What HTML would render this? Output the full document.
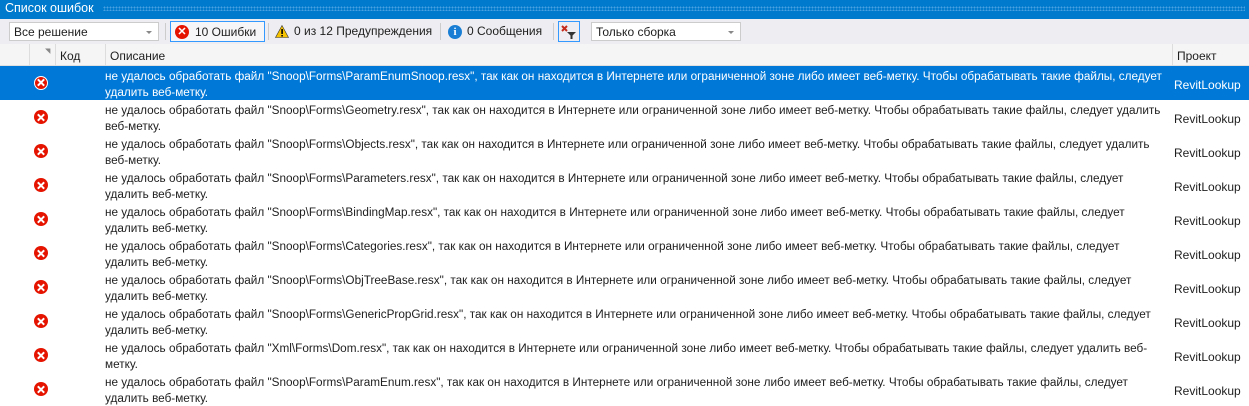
<!DOCTYPE html>
<html><head><meta charset="utf-8"><style>
*{margin:0;padding:0;box-sizing:border-box}
body{width:1249px;height:402px;overflow:hidden;background:#fff;font-family:"Segoe UI","Liberation Sans",sans-serif;font-size:12px;color:#1e1e1e;position:relative}
.title{position:absolute;left:0;top:0;width:1249px;height:19px;background:#007acc;color:#fff;font-size:12.5px;padding:1px 0 0 5px}
.dots{position:absolute;left:103px;right:4px;top:6px;height:5px;background-image:radial-gradient(#4aa3e0 0.8px,transparent 1px);background-size:3px 3px}
.tb{position:absolute;top:19px;left:0;width:1249px;height:25px;background:#eeeef2}
.combo{position:absolute;top:3px;height:19px;background:#fff;border:1px solid #ccc;padding:2px 0 0 4px}
.combo:after{content:"";position:absolute;right:6px;top:8px;border:3px solid transparent;border-top:3px solid #888}
.sep{position:absolute;top:4px;width:1px;height:17px;background:#ccc}
.btn{position:absolute;top:2px;height:21px;padding:3px 0 0 0;white-space:nowrap}
.hdr{position:absolute;top:44px;left:0;width:1249px;height:22px;background:#f5f5f5;border-bottom:1px solid #e0e0e0}
.hdr span{position:absolute;top:5px}
.vl{position:absolute;top:0;width:1px;height:22px;background:#ddd}
.row{position:absolute;left:0;width:1249px;height:34px}
.row.sel{background:#0078d7;color:#fff}
.ic{position:absolute;left:34px;top:10px;width:14px;height:14px;border-radius:50%;background:#e51400}
.sel .ic{border:1.5px solid #fff}
.ic:before,.ic:after{content:"";position:absolute;left:6px;top:2.5px;width:2px;height:9px;background:#fff;transform:rotate(45deg)}
.sel .ic:before,.sel .ic:after{left:4.5px;top:1px}
.ic:after{transform:rotate(-45deg)}
.d{position:absolute;left:105px;top:3px;line-height:15.5px;white-space:nowrap;width:1066px;overflow:hidden;font-size:11.75px}
.p{position:absolute;left:1174px;top:12px}
</style></head><body>
<div class="title">Список ошибок<div class="dots"></div></div>
<div class="tb">
<div class="combo" style="left:9px;width:150px">Все решение</div>
<div class="sep" style="left:165px"></div>
<div class="btn" style="left:170px;width:95px;border:1px solid #3399ff;background:#f6f6f9;padding-left:24px">10 Ошибки<span style="position:absolute;left:4px;top:3px;width:14px;height:14px;border-radius:50%;background:#e51400;color:#fff;font-size:11px;line-height:14px;text-align:center;font-weight:bold">✕</span></div>
<div class="sep" style="left:268px"></div>
<div class="btn" style="left:275px;padding-left:19px"><svg style="position:absolute;left:0;top:4px" width="14" height="13"><path d="M7 0.5 L13.5 12.5 H0.5Z" fill="#f8c400" stroke="#333" stroke-width="0.6"/><rect x="6.3" y="4" width="1.6" height="5" fill="#000"/><rect x="6.3" y="10" width="1.6" height="1.5" fill="#000"/></svg>0 из 12 Предупреждения</div>
<div class="sep" style="left:440px"></div>
<div class="btn" style="left:448px;padding-left:19px"><span style="position:absolute;left:0;top:4px;width:14px;height:14px;border-radius:50%;background:#1a7fd4;color:#fff;font-size:11px;line-height:14px;text-align:center;font-weight:bold;font-family:'Liberation Serif',serif">i</span>0 Сообщения</div>
<div class="sep" style="left:553px"></div>
<div class="btn" style="left:558px;width:22px;border:1px solid #3399ff;padding-top:1px"><svg width="20" height="18"><path d="M3 3 L8 8 M8 3 L3 8" stroke="#c42b1c" stroke-width="2"/><path d="M8 9 H17 L13.5 12.5 V16 H11.5 V12.5Z" fill="#333"/></svg></div>
<div class="combo" style="left:591px;width:150px">Только сборка</div>
</div>
<div class="hdr">
<div class="vl" style="left:29px"></div><div class="vl" style="left:55px"></div><div class="vl" style="left:105px"></div><div class="vl" style="left:1172px"></div>
<span style="left:45px;top:3px;font-size:7px;color:#888">◥</span>
<span style="left:60px">Код</span><span style="left:110px">Описание</span><span style="left:1177px">Проект</span>
</div>
<div class="row sel" style="top:66px"><div class="ic"></div><div class="d">не удалось обработать файл "Snoop\Forms\ParamEnumSnoop.resx", так как он находится в Интернете или ограниченной зоне либо имеет веб-метку. Чтобы обрабатывать такие файлы, следует<br>удалить веб-метку.</div><div class="p">RevitLookup</div></div>
<div class="row" style="top:100px"><div class="ic"></div><div class="d">не удалось обработать файл "Snoop\Forms\Geometry.resx", так как он находится в Интернете или ограниченной зоне либо имеет веб-метку. Чтобы обрабатывать такие файлы, следует удалить<br>веб-метку.</div><div class="p">RevitLookup</div></div>
<div class="row" style="top:134px"><div class="ic"></div><div class="d">не удалось обработать файл "Snoop\Forms\Objects.resx", так как он находится в Интернете или ограниченной зоне либо имеет веб-метку. Чтобы обрабатывать такие файлы, следует удалить<br>веб-метку.</div><div class="p">RevitLookup</div></div>
<div class="row" style="top:168px"><div class="ic"></div><div class="d">не удалось обработать файл "Snoop\Forms\Parameters.resx", так как он находится в Интернете или ограниченной зоне либо имеет веб-метку. Чтобы обрабатывать такие файлы, следует<br>удалить веб-метку.</div><div class="p">RevitLookup</div></div>
<div class="row" style="top:202px"><div class="ic"></div><div class="d">не удалось обработать файл "Snoop\Forms\BindingMap.resx", так как он находится в Интернете или ограниченной зоне либо имеет веб-метку. Чтобы обрабатывать такие файлы, следует<br>удалить веб-метку.</div><div class="p">RevitLookup</div></div>
<div class="row" style="top:236px"><div class="ic"></div><div class="d">не удалось обработать файл "Snoop\Forms\Categories.resx", так как он находится в Интернете или ограниченной зоне либо имеет веб-метку. Чтобы обрабатывать такие файлы, следует<br>удалить веб-метку.</div><div class="p">RevitLookup</div></div>
<div class="row" style="top:270px"><div class="ic"></div><div class="d">не удалось обработать файл "Snoop\Forms\ObjTreeBase.resx", так как он находится в Интернете или ограниченной зоне либо имеет веб-метку. Чтобы обрабатывать такие файлы, следует<br>удалить веб-метку.</div><div class="p">RevitLookup</div></div>
<div class="row" style="top:304px"><div class="ic"></div><div class="d">не удалось обработать файл "Snoop\Forms\GenericPropGrid.resx", так как он находится в Интернете или ограниченной зоне либо имеет веб-метку. Чтобы обрабатывать такие файлы, следует<br>удалить веб-метку.</div><div class="p">RevitLookup</div></div>
<div class="row" style="top:338px"><div class="ic"></div><div class="d">не удалось обработать файл "Xml\Forms\Dom.resx", так как он находится в Интернете или ограниченной зоне либо имеет веб-метку. Чтобы обрабатывать такие файлы, следует удалить веб-<br>метку.</div><div class="p">RevitLookup</div></div>
<div class="row" style="top:372px"><div class="ic"></div><div class="d">не удалось обработать файл "Snoop\Forms\ParamEnum.resx", так как он находится в Интернете или ограниченной зоне либо имеет веб-метку. Чтобы обрабатывать такие файлы, следует<br>удалить веб-метку.</div><div class="p">RevitLookup</div></div>
</body></html>
